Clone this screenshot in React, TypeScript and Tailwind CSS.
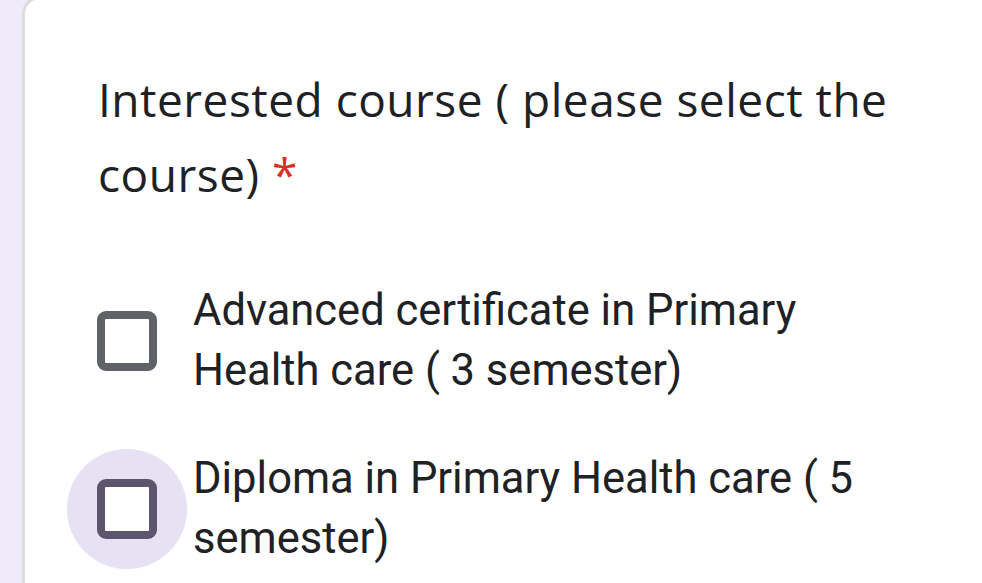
import React from "react";

function Box({ dark }: { dark?: boolean }) {
  return (
    <div
      className={
        "w-[60px] h-[60px] rounded-[9px] border-[8px] bg-white " +
        (dark ? "border-[#5b566d]" : "border-[#5f6368]")
      }
    />
  );
}

function Option({ lines, focused }: { lines: string[]; focused?: boolean }) {
  return (
    <div className="flex items-center">
      <div
        className={
          "w-[120px] h-[120px] rounded-full flex items-center justify-center shrink-0 " +
          (focused ? "bg-[#e7e1f4]" : "")
        }
      >
        <Box dark={focused} />
      </div>
      <div
        className="ml-[6px] text-[43.5px] leading-[60px] text-[#202124]"
        style={{ fontFamily: "Roboto, 'Liberation Sans', sans-serif" }}
      >
        {lines.map((l, i) => (
          <div key={i} className="whitespace-nowrap">
            {l}
          </div>
        ))}
      </div>
    </div>
  );
}

export default function App() {
  return (
    <div className="w-[982px] h-[583px] overflow-hidden bg-[#f0ebf8] flex pl-[22px]">
      <div className="mt-[-4px] w-[1000px] shrink-0 bg-white rounded-tl-[18px] border-l-[3px] border-t-[3px] border-[#dadce0]">
        <div
          className="pl-[73px] pt-[63px] text-[46px] leading-[75px] tracking-[0.5px] text-[#202124]"
          style={{ fontFamily: "'Open Sans', sans-serif" }}
        >
          <div className="whitespace-nowrap">Interested course ( please select the</div>
          <div className="whitespace-nowrap">
            course) <span className="text-[#d93025]">*</span>
          </div>
        </div>
        <div className="pl-[42px] mt-[69px] flex flex-col gap-[48px]">
          <Option lines={["Advanced certificate in Primary", "Health care ( 3 semester)"]} />
          <Option lines={["Diploma in Primary Health care ( 5", "semester)"]} focused />
        </div>
      </div>
    </div>
  );
}
